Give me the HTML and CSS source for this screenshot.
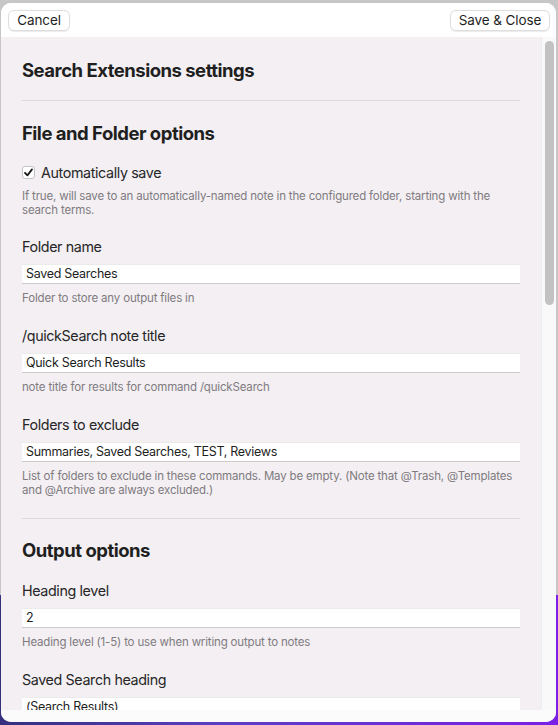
FILE: index.html
```html
<!DOCTYPE html>
<html>
<head>
<meta charset="utf-8">
<link rel="stylesheet" href="styles.css">
</head>
<body>
<div class="window">
  <div class="toolbar">
    <button class="btn btn-cancel">Cancel</button>
    <button class="btn btn-save">Save &amp; Close</button>
  </div>
  <div class="main">
    <div class="content">
      <h1 class="title">Search Extensions settings</h1>
      <hr class="rule rule-top">
      <h2 class="section">File and Folder options</h2>
      <div class="check-row">
        <span class="checkbox"><svg width="11" height="11" viewBox="0 0 11 11"><path d="M2 5.8 L4.4 8.4 L9 2.4" fill="none" stroke="#1a1a1a" stroke-width="1.8" stroke-linecap="round" stroke-linejoin="round"/></svg></span>
        <span class="check-label">Automatically save</span>
      </div>
      <p class="desc desc-check">If true, will save to an automatically-named note in the configured folder, starting with the search terms.</p>

      <div class="setting">
        <div class="label">Folder name</div>
        <div class="input">Saved Searches</div>
        <p class="desc">Folder to store any output files in</p>
      </div>
      <div class="setting">
        <div class="label">/quickSearch note title</div>
        <div class="input">Quick Search Results</div>
        <p class="desc">note title for results for command /quickSearch</p>
      </div>
      <div class="setting">
        <div class="label">Folders to exclude</div>
        <div class="input">Summaries, Saved Searches, TEST, Reviews</div>
        <p class="desc">List of folders to exclude in these commands. May be empty. (Note that @Trash, @Templates and @Archive are always excluded.)</p>
      </div>
      <hr class="rule rule-mid">
      <h2 class="section section-out">Output options</h2>
      <div class="setting">
        <div class="label">Heading level</div>
        <div class="input">2</div>
        <p class="desc">Heading level (1-5) to use when writing output to notes</p>
      </div>
      <div class="setting">
        <div class="label">Saved Search heading</div>
        <div class="input">(Search Results)</div>
        <p class="desc">&nbsp;</p>
      </div>
    </div>
    <div class="scrollbar"><div class="thumb"></div></div>
  </div>
  <div class="footer"></div>
</div>
</body>
</html>
```
FILE: styles.css
```css
* { box-sizing: border-box; }
html, body { margin: 0; padding: 0; }
body {
  width: 558px;
  height: 725px;
  overflow: hidden;
  font-family: Inter, "Liberation Sans", sans-serif;
  background:
    linear-gradient(to bottom, #c7c7c7 0, #c7c7c7 595px, transparent 595px),
    linear-gradient(to right, #34307e, #5b3fc4 40%, #7a20e6);
  padding: 3px 2px 3px 1px;
}
.window {
  height: 719px;
  border-radius: 10px;
  background: #fbfbfb;
  display: flex;
  flex-direction: column;
  overflow: hidden;
}
.toolbar {
  height: 34px;
  flex: none;
  background: #ffffff;
  display: flex;
  align-items: center;
  justify-content: space-between;
  padding: 0 6px 0 7px;
}
.btn {
  font-family: Inter, "Liberation Sans", sans-serif;
  font-size: 13.5px;
  letter-spacing: -0.1px;
  color: #1f1f1f;
  background: #fff;
  border: 1px solid #dedede;
  border-radius: 6px;
  height: 21px;
  padding: 0;
  box-shadow: 0 0.5px 1px rgba(0,0,0,0.08);
}
.btn-cancel { width: 62px; }
.btn-save { width: 100px; }
.main {
  flex: 1;
  display: flex;
  background: #f3eff3;
  overflow: hidden;
  min-height: 0;
}
.content {
  flex: 1;
  padding: 21px 21px 0 21px;
  overflow: hidden;
  color: #262626;
}
.scrollbar {
  width: 15px;
  flex: none;
  background: #f9f9f9;
  border-left: 1px solid #ededed;
  padding: 4px 2px 0 3px;
}
.thumb {
  width: 9px;
  height: 264px;
  border-radius: 5px;
  background: #c2c2c2;
}
.footer {
  height: 12px;
  flex: none;
  background: #fbfbfb;
}
.title, .section {
  margin: 0;
  font-size: 18.5px;
  font-weight: 700;
  line-height: 24px;
  letter-spacing: -0.5px;
  color: #1f1f1f;
}
.rule {
  border: 0;
  height: 1px;
  background: #dcd8dc;
  margin: 0;
}
.rule-top { margin-top: 18px; }
.section { margin-top: 20px; }
.rule-mid { margin-top: 21px; }
.section-out { margin-top: 19px; }
.check-row {
  margin-top: 18px;
  height: 19px;
  display: flex;
  align-items: center;
  gap: 6px;
}
.checkbox {
  width: 13px;
  height: 13px;
  background: #fff;
  border: 1px solid #c4c4c4;
  border-radius: 3px;
  display: flex;
  align-items: center;
  justify-content: center;
}
.check-label, .label {
  font-size: 14.3px;
  line-height: 20px;
  letter-spacing: -0.38px;
  color: #262626;
}
.desc {
  margin: 0;
  font-size: 11.5px;
  line-height: 14px;
  letter-spacing: -0.17px;
  color: #7f7b7f;
}
.desc-check { margin-top: 7px; }
.setting { margin-top: 20px; }
.section + .setting { margin-top: 19px; }
.desc-check + .setting { margin-top: 20px; }
.setting + .setting { margin-top: 21px; }
.input {
  margin: 7px 0;
  height: 20px;
  background: #fff;
  border-top: 1px solid #ebebeb;
  border-bottom: 1px solid #cbcbcb;
  font-size: 12.5px;
  line-height: 18px;
  letter-spacing: -0.3px;
  padding-left: 4px;
  color: #1e1e1e;
}
```
